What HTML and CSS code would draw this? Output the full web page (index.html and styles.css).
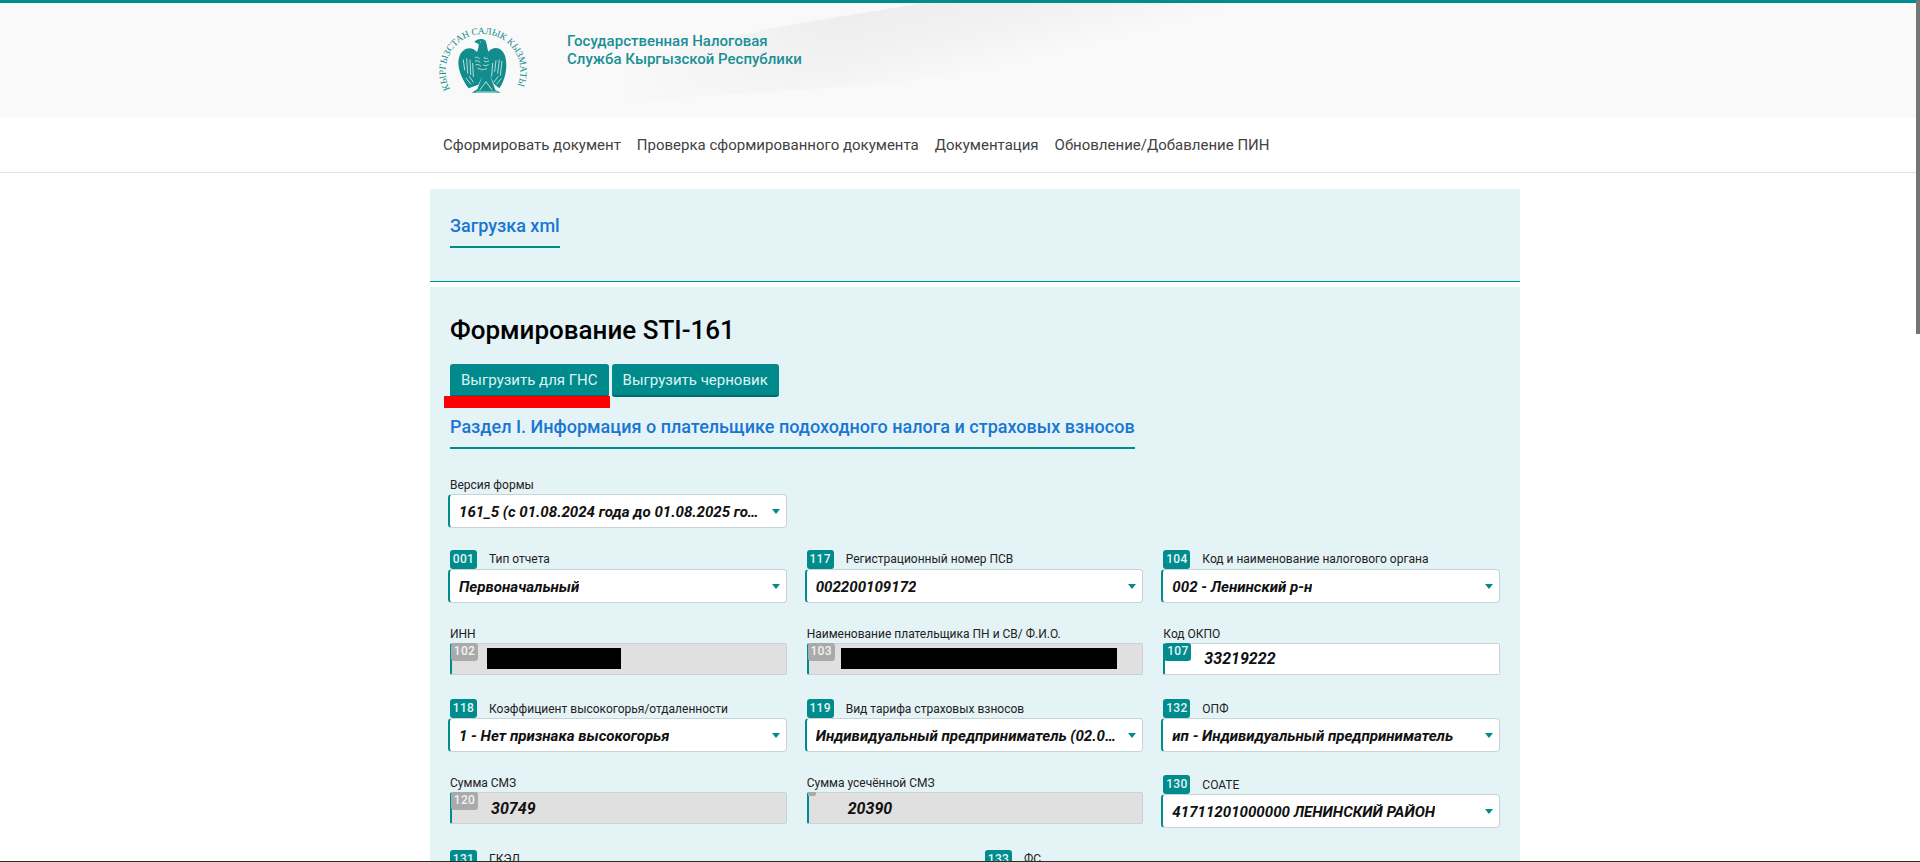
FILE: index.html
```html
<!DOCTYPE html>
<html lang="ru">
<head>
<meta charset="utf-8">
<title>Формирование STI-161</title>
<link rel="stylesheet" href="styles.css">
</head>
<body>
<div class="page">
  <header class="top">
    <svg class="wave" viewBox="0 0 1916 115" preserveAspectRatio="none" aria-hidden="true">
      <defs>
        <linearGradient id="wg" gradientUnits="userSpaceOnUse" x1="900" y1="5" x2="920" y2="85">
          <stop offset="0" stop-color="#eeeeee"/>
          <stop offset=".5" stop-color="#f2f2f2"/>
          <stop offset="1" stop-color="#f9f9f9"/>
        </linearGradient>
        <linearGradient id="wf" gradientUnits="userSpaceOnUse" x1="620" y1="0" x2="840" y2="0">
          <stop offset="0" stop-color="#f9f9f9" stop-opacity="1"/>
          <stop offset="1" stop-color="#f9f9f9" stop-opacity="0"/>
        </linearGradient>
      </defs>
      <path d="M925 0 L800 20 L700 40 L600 64 L600 100 L900 80 L1120 42 L1345 0Z" fill="url(#wg)"/>
      <rect x="590" y="0" width="250" height="115" fill="url(#wf)"/>
    </svg>
    <div class="brand">
      <svg class="logo" viewBox="0 0 90 72" role="img" aria-label="Герб">
        <defs><path id="arc" d="M12 66 A37.4 37.4 0 1 1 78 66"/></defs>
        <text class="logo-text"><textPath href="#arc" textLength="150" lengthAdjust="spacing">КЫРГЫЗСТАН САЛЫК КЫЗМАТЫ</textPath></text>
        <g transform="translate(-8,-13) scale(.3333)">
          <path fill="#128c8d" d="M133 96C140 86 160 84 167 93C171 101 171 113 175 125C192 106 218 112 226 140C233 168 228 206 208 235L192 222L180 196L196 240L212 248L125 248L142 238L158 196L145 224L116 235C94 206 78 166 88 140C96 113 125 106 141 126C144 118 147 108 146 102Z"/>
          <g fill="none" stroke="#f4f9f9" stroke-width="2.2" stroke-linecap="round">
            <path d="M136 142C140 140 146 142 148 146M164 141C160 145 165 147 172 145M136 153C142 151 146 153 150 157M162 153C166 157 170 156 176 153M138 164C144 162 148 165 152 168M160 165C166 169 170 167 175 164M144 176C150 175 152 178 156 180M158 178C162 180 166 178 170 176"/>
            <path d="M100 150L104 180M110 146L113 190M120 150L122 194M128 160L130 200M198 152L194 184M208 150L203 190M216 154L211 196M188 160L185 198"/>
            <path d="M108 205L122 222M118 200L130 216M214 206L200 222M204 200L192 216"/>
            <path d="M150 240L168 215L186 240M140 246H200"/>
          </g>
          <circle cx="151" cy="96" r="1.8" fill="#fff"/>
        </g>
      </svg>
      <div class="brand-name">Государственная Налоговая<br>Служба Кыргызской Республики</div>
    </div>
  </header>

  <nav class="nav">
    <a class="nav-link">Сформировать документ</a>
    <a class="nav-link">Проверка сформированного документа</a>
    <a class="nav-link">Документация</a>
    <a class="nav-link">Обновление/Добавление ПИН</a>
  </nav>

  <main class="content">
    <section class="tabs">
      <span class="tab">Загрузка xml</span>
    </section>

    <section class="form">
      <h1 class="title">Формирование STI-161</h1>
      <div class="actions">
        <button class="btn">Выгрузить для ГНС</button>
        <button class="btn">Выгрузить черновик</button>
        <span class="redline"></span>
      </div>
      <h2 class="section-title">Раздел I. Информация о плательщике подоходного налога и страховых взносов</h2>

      <div class="version">
        <div class="plain-label">Версия формы</div>
        <div class="select"><span class="value">161_5 (с 01.08.2024 года до 01.08.2025 года включительно)</span><i class="arrow"></i></div>
      </div>

      <div class="row">
        <div class="field">
          <div class="head"><span class="badge">001</span><span class="label">Тип отчета</span></div>
          <div class="select"><span class="value">Первоначальный</span><i class="arrow"></i></div>
        </div>
        <div class="field">
          <div class="head"><span class="badge">117</span><span class="label">Регистрационный номер ПСВ</span></div>
          <div class="select"><span class="value">002200109172</span><i class="arrow"></i></div>
        </div>
        <div class="field">
          <div class="head"><span class="badge">104</span><span class="label">Код и наименование налогового органа</span></div>
          <div class="select"><span class="value">002 - Ленинский р-н</span><i class="arrow"></i></div>
        </div>
      </div>

      <div class="row">
        <div class="field">
          <div class="plain-label">ИНН</div>
          <div class="input is-readonly"><span class="mini">102</span><span class="redact redact-inn"></span></div>
        </div>
        <div class="field">
          <div class="plain-label">Наименование плательщика ПН и СВ/ Ф.И.О.</div>
          <div class="input is-readonly"><span class="mini">103</span><span class="redact redact-name"></span></div>
        </div>
        <div class="field">
          <div class="plain-label">Код ОКПО</div>
          <div class="input"><span class="mini mini-teal">107</span><span class="num">33219222</span></div>
        </div>
      </div>

      <div class="row">
        <div class="field">
          <div class="head"><span class="badge">118</span><span class="label">Коэффициент высокогорья/отдаленности</span></div>
          <div class="select"><span class="value">1 - Нет признака высокогорья</span><i class="arrow"></i></div>
        </div>
        <div class="field">
          <div class="head"><span class="badge">119</span><span class="label">Вид тарифа страховых взносов</span></div>
          <div class="select"><span class="value">Индивидуальный предприниматель (02.01.2024)</span><i class="arrow"></i></div>
        </div>
        <div class="field">
          <div class="head"><span class="badge">132</span><span class="label">ОПФ</span></div>
          <div class="select"><span class="value">ип - Индивидуальный предприниматель</span><i class="arrow"></i></div>
        </div>
      </div>

      <div class="row">
        <div class="field">
          <div class="plain-label">Сумма СМЗ</div>
          <div class="input is-readonly"><span class="mini">120</span><span class="num">30749</span></div>
        </div>
        <div class="field">
          <div class="plain-label">Сумма усечённой СМЗ</div>
          <div class="input is-readonly"><span class="mini mini-empty"></span><span class="num">20390</span></div>
        </div>
        <div class="field field-down">
          <div class="head"><span class="badge">130</span><span class="label">СОАТЕ</span></div>
          <div class="select"><span class="value">41711201000000 ЛЕНИНСКИЙ РАЙОН</span><i class="arrow"></i></div>
        </div>
      </div>

      <div class="row row-two">
        <div class="field">
          <div class="head"><span class="badge">131</span><span class="label">ГКЭД</span></div>
        </div>
        <div class="field">
          <div class="head"><span class="badge">133</span><span class="label">ФС</span></div>
        </div>
      </div>
    </section>
  </main>
  <div class="thumb"></div>
  <div class="desk-edge"></div>
</div>
</body>
</html>
```
FILE: styles.css
```css
* { box-sizing: border-box; }
html, body { margin: 0; height: 862px; overflow: hidden; background: #fff; }
body { font-family: Roboto, "Liberation Sans", sans-serif; color: #111; }
.page { position: relative; width: 1920px; height: 862px; overflow: hidden; }

.top { position: relative; width: 1916px; height: 118px; background: #f9f9f9; border-top: 3px solid #008b8d; }
.wave { position: absolute; left: 0; top: 0; width: 1916px; height: 115px; }
.brand { position: relative; display: flex; align-items: flex-start; margin-left: 438px; padding-top: 20px; }
.logo { width: 90px; height: 72px; flex: none; }
.logo-text { font-family: "Liberation Serif", serif; font-size: 9.6px; fill: #128c8d; }
.brand-name { margin: 9px 0 0 39px; font-size: 15px; font-weight: 500; line-height: 18px; color: #1a9096; }

.nav { display: flex; gap: 16px; width: 1916px; height: 55px; padding-left: 443px; align-items: center; border-bottom: 1px solid #e2e2e2; }
.nav-link { font-size: 15px; color: #424242; }

.content { width: 1090px; margin: 16px 0 0 430px; }
.tabs { height: 93px; padding: 22px 20px 0; background: #e4f3f5; border-bottom: 1px solid #008b8d; }
.tab { display: inline-block; height: 37px; padding-top: 4px; border-bottom: 2px solid #008b8d; font-size: 18px; font-weight: 500; line-height: 22px; color: #1976d2; }

.form { margin-top: 5px; padding: 27px 20px 0; height: 700px; background: #e4f3f5; }
.title { margin: 0; font-size: 26px; font-weight: 500; line-height: 32px; color: #000; }
.actions { position: relative; display: flex; gap: 3px; margin-top: 18px; }
.btn { height: 33px; padding: 0 11px; border: 0; border-bottom: 2px solid #006a6c; border-radius: 3px; background: #008a8c; color: #dff3f3; font: 400 15px/20px Roboto, sans-serif; }
.redline { position: absolute; left: -6px; top: 32px; width: 166px; height: 12px; background: #ff0000; }
.section-title { width: fit-content; margin: 18px 0 0; padding-bottom: 8px; border-bottom: 2px solid #008b8d; font-size: 18px; font-weight: 500; line-height: 24px; letter-spacing: .015px; color: #1976d2; }

.version { width: 337px; margin-top: 27px; margin-bottom: 22px; }
.row { display: grid; grid-template-columns: repeat(3, 1fr); column-gap: 20px; min-height: 52.67px; margin-bottom: 22.08px; }
.row-two { grid-template-columns: repeat(2, 1fr); }
.field { min-width: 0; }
.field-down { margin-top: 1px; }
.head { display: flex; align-items: center; height: 18.67px; }
.badge { flex: none; width: 27px; height: 18.67px; border-radius: 3px; background: #008b8d; color: #e6f6f6; font-size: 12px; font-weight: 500; line-height: 19px; text-align: center; letter-spacing: .3px; }
.label { margin-left: 12px; font-size: 12px; line-height: 16px; color: #222; white-space: nowrap; }
.plain-label { height: 18px; font-size: 12px; line-height: 18px; color: #222; white-space: nowrap; }

.select { position: relative; display: flex; align-items: center; height: 34px; margin-left: -2px; padding: 2px 24px 0 9px; background: #fff; border: 1px solid #c9d3d5; border-left: 2px solid #008b8d; border-radius: 4px; }
.value { overflow: hidden; white-space: nowrap; text-overflow: ellipsis; font-size: 15.1px; font-weight: 700; font-style: italic; color: #111; }
.arrow { position: absolute; right: 6px; top: 14px; width: 0; height: 0; border-left: 4px solid transparent; border-right: 4px solid transparent; border-top: 5px solid #008b8d; }

.input { position: relative; display: flex; align-items: center; height: 32px; background: #fff; border: 1px solid #c9d3d5; border-left: 2px solid #008b8d; border-radius: 2px; }
.is-readonly { background: #e0e0e0; }
.mini { position: absolute; left: -1px; top: -1px; width: 27px; height: 18px; border-radius: 3px; background: #aaaaaa; color: #f2f2f2; font-size: 12px; font-weight: 500; line-height: 17px; text-align: center; letter-spacing: .3px; }
.mini-teal { background: #008b8d; color: #e6f6f6; }
.mini-empty { width: 8px; height: 4px; border-radius: 0 0 2px 0; }
.num { margin-left: 39px; font-size: 16px; font-weight: 700; font-style: italic; color: #111; }
.redact { display: block; height: 21px; background: #000; }
.redact-inn { width: 134px; margin-left: 35px; }
.redact-name { width: 276px; margin-left: 32px; }

.thumb { position: absolute; right: 0; top: 0; width: 4px; height: 334px; background: #757575; }
.desk-edge { position: absolute; left: 0; right: 0; bottom: 0; height: 1px; background: #24311c; }
```
